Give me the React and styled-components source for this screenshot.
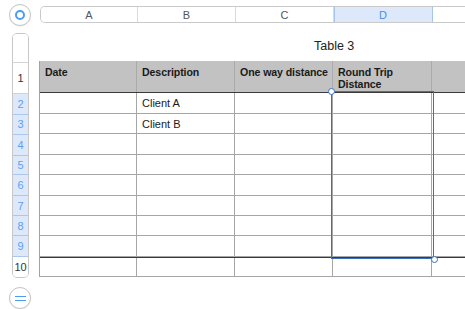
import React from "react";
import styled, { createGlobalStyle } from "styled-components";

const Global = createGlobalStyle`
  html, body { margin: 0; padding: 0; background: #fff; }
  body { font-family: "Liberation Sans", Arial, sans-serif; }
  #root { width: 465px; height: 309px; overflow: hidden; }
`;

const Page = styled.div`
  display: grid;
  grid-template-columns: 40px 425px;
  grid-template-rows: 30px 279px;
  width: 465px;
  height: 309px;
  overflow: hidden;
`;

const Corner = styled.div`
  display: flex;
  align-items: flex-start;
  padding: 4px 0 0 9px;
`;

const RoundButton = styled.div`
  width: 22px;
  height: 22px;
  box-sizing: border-box;
  border: 1px solid #c4c4c4;
  border-radius: 50%;
  background: #fff;
  display: flex;
  align-items: center;
  justify-content: center;
  box-shadow: 0 0.5px 1px rgba(0,0,0,0.08);
`;

const Ring = styled.div`
  width: 10px;
  height: 10px;
  box-sizing: border-box;
  border: 2px solid #4c9cf1;
  border-radius: 50%;
`;

const Equals = styled.div`
  width: 11px;
  height: 5px;
  box-sizing: border-box;
  border-top: 1.5px solid #4c9cf1;
  border-bottom: 1.5px solid #4c9cf1;
`;

const ColumnBar = styled.div`
  margin-top: 6px;
  height: 17px;
  box-sizing: border-box;
  display: grid;
  grid-template-columns: 97px 98px 98px 99px 60px;
  border: 1px solid #cacaca;
  border-right: none;
  border-radius: 5px 0 0 5px;
  overflow: hidden;
`;

const ColHead = styled.div`
  display: flex;
  align-items: center;
  justify-content: center;
  font-size: 11px;
  color: ${p => (p.$active ? "#4a90e2" : "#555")};
  background: ${p => (p.$active ? "#dde9fb" : "#fff")};
  border-right: 1px solid ${p => (p.$active ? "#a7c5ec" : "#dadada")};
  box-shadow: ${p => (p.$active ? "inset 1px 0 0 #a7c5ec" : "none")};
`;

const Gutter = styled.div`
  display: flex;
  flex-direction: column;
`;

const RowHeaders = styled.div`
  margin: 3px 0 0 12px;
  width: 17px;
  box-sizing: border-box;
  border: 1px solid #c8c8c8;
  border-radius: 5px;
  overflow: hidden;
  display: flex;
  flex-direction: column;
`;

const RowHead = styled.div`
  height: ${p => p.$h}px;
  box-sizing: border-box;
  display: flex;
  align-items: center;
  justify-content: center;
  font-size: 11px;
  color: ${p => (p.$active ? "#5c9ff0" : "#333")};
  background: ${p => (p.$active ? "#dde9fb" : "#fff")};
  border-bottom: ${p => (p.$last ? "none" : "1px solid " + (p.$active ? "#aac7ee" : "#d4d4d4"))};
`;

const BottomButton = styled.div`
  margin: 9px 0 0 9px;
`;

const Main = styled.div`
  display: flex;
  flex-direction: column;
`;

const Title = styled.div`
  height: 31px;
  box-sizing: border-box;
  padding: 9px 0 0 274px;
  font-size: 12.5px;
  color: #222;
  line-height: 15px;
`;

const TableWrap = styled.div`
  position: relative;
  border-left: 1px solid #a2a2a2;
  margin-left: -1px;
  width: 426px;
`;

const Row = styled.div`
  display: grid;
  grid-template-columns: 97px 98px 98px 99px 60px;
  height: ${p => p.$h}px;
  box-sizing: border-box;
  background: ${p => (p.$header ? "#c1c2c1" : "#fff")};
  border-top: ${p => (p.$footer ? "1px solid #3a3a3a" : "none")};
  border-bottom: 1px solid ${p => (p.$header ? "#3a3a3a" : "#a6a6a6")};
`;

const Cell = styled.div`
  box-sizing: border-box;
  border-right: 1px solid ${p => (p.$header ? "#a9aaa9" : "#a6a6a6")};
  padding: ${p => (p.$header ? "5px 1px 0 5px" : "0 5px")};
  display: flex;
  align-items: ${p => (p.$header ? "flex-start" : "center")};
  font-size: ${p => (p.$header ? "10.6px" : "11px")};
  line-height: 12px;
  font-weight: ${p => (p.$header ? "bold" : "normal")};
  letter-spacing: ${p => (p.$header ? "-0.1px" : "0")};
  color: #1a1a1a;
`;

const Selection = styled.div`
  position: absolute;
  left: 291px;
  top: 30px;
  width: 103px;
  height: 168px;
  box-sizing: border-box;
  border: 1.3px solid #3b70c0;
  pointer-events: none;
`;

const Handle = styled.div`
  position: absolute;
  width: 7px;
  height: 7px;
  box-sizing: border-box;
  border-radius: 50%;
  background: #fff;
  border: 1.3px solid #3b70c0;
  ${p => (p.$pos === "tl" ? "left: -4.5px; top: -4.5px;" : "right: -4.5px; bottom: -4.5px;")}
`;

const headers = ["Date", "Description", "One way distance", "Round Trip Distance", ""];
const rowHeights = [21, 20, 21, 20, 21, 20, 20, 21, 20];
const bodyData = [
  ["", "Client A"],
  ["", "Client B"],
];

export default function App() {
  return (
    <>
      <Global />
      <Page>
        <Corner>
          <RoundButton><Ring /></RoundButton>
        </Corner>
        <ColumnBar>
          {["A", "B", "C", "D", ""].map((c, i) => (
            <ColHead key={i} $active={c === "D"}>{c}</ColHead>
          ))}
        </ColumnBar>
        <Gutter>
          <RowHeaders>
            <RowHead $h={29} />
            <RowHead $h={31}>1</RowHead>
            {rowHeights.map((h, i) => (
              <RowHead key={i} $h={h} $active={i < 8} $last={i === 8}>{i + 2}</RowHead>
            ))}
          </RowHeaders>
          <BottomButton>
            <RoundButton><Equals /></RoundButton>
          </BottomButton>
        </Gutter>
        <Main>
          <Title>Table 3</Title>
          <TableWrap>
            <Row $h={32} $header>
              {headers.map((h, i) => (
                <Cell key={i} $header>{h}</Cell>
              ))}
            </Row>
            {rowHeights.map((h, r) => (
              <Row key={r} $h={h} $footer={r === 8}>
                {[0, 1, 2, 3, 4].map(c => (
                  <Cell key={c}>{(bodyData[r] && bodyData[r][c]) || ""}</Cell>
                ))}
              </Row>
            ))}
            <Selection>
              <Handle $pos="tl" />
              <Handle $pos="br" />
            </Selection>
          </TableWrap>
        </Main>
      </Page>
    </>
  );
}
